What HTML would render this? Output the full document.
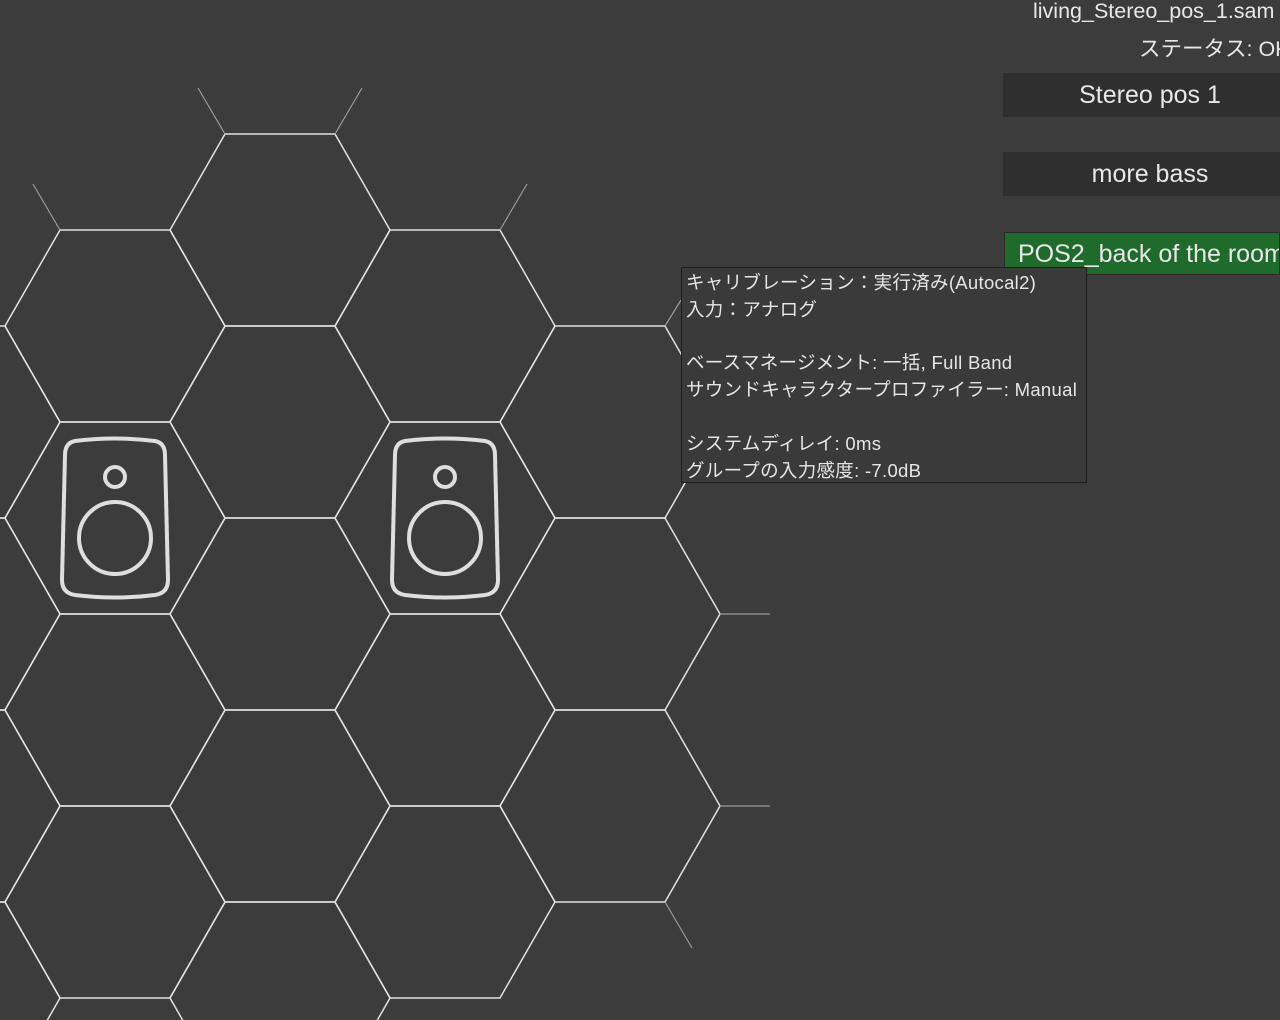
<!DOCTYPE html>
<html><head><meta charset="utf-8"><style>
html,body{margin:0;padding:0;overflow:hidden;width:1280px;height:1020px;}
body{background:#3c3c3c;position:relative;font-family:"Liberation Sans","Noto Sans CJK JP",sans-serif;color:#e8e8e8;}
svg{position:absolute;left:0;top:0;}
.t{position:absolute;white-space:nowrap;font-size:21.5px;}
.btn{position:absolute;left:1003px;width:294px;height:44px;background:#2f2f2f;font-size:25px;line-height:44px;text-align:center;white-space:nowrap;}
.green{position:absolute;left:1004px;top:232px;width:276px;height:43px;background:#1f6b2b;border:1px solid #2a2a2a;font-size:25px;line-height:43px;padding-left:13px;box-sizing:border-box;white-space:nowrap;overflow:hidden;}
.tip{position:absolute;left:681px;top:267px;width:406px;height:216px;background:#3a3a3a;border:1px solid #1e1e1e;box-sizing:border-box;font-size:18.5px;line-height:26.8px;padding:2px 0 0 4px;color:#e6e6e6;white-space:nowrap;overflow:hidden;}
.tip span{letter-spacing:0.3px;}
</style></head><body>
<svg width="1280" height="1020" viewBox="0 0 1280 1020">
<defs><polygon id="h" points="-110,0 -55,-96 55,-96 110,0 55,96 -55,96" fill="none" stroke="#e2e2e2" stroke-width="1.5"/></defs>
<use href="#h" x="-50" y="422"/><use href="#h" x="-50" y="614"/><use href="#h" x="-50" y="806"/><use href="#h" x="-50" y="998"/>
<use href="#h" x="115" y="326"/><use href="#h" x="115" y="518"/><use href="#h" x="115" y="710"/><use href="#h" x="115" y="902"/>
<use href="#h" x="280" y="230"/><use href="#h" x="280" y="422"/><use href="#h" x="280" y="614"/><use href="#h" x="280" y="806"/><use href="#h" x="280" y="998"/>
<use href="#h" x="445" y="326"/><use href="#h" x="445" y="518"/><use href="#h" x="445" y="710"/><use href="#h" x="445" y="902"/>
<use href="#h" x="610" y="422"/><use href="#h" x="610" y="614"/><use href="#h" x="610" y="806"/>
<g stroke="#9a9a9a" stroke-width="1.2">
<line x1="225" y1="134" x2="198" y2="88"/><line x1="335" y1="134" x2="362" y2="88"/>
<line x1="60" y1="230" x2="33" y2="184"/><line x1="500" y1="230" x2="527" y2="184"/>
<line x1="665" y1="326" x2="681" y2="300"/><line x1="720" y1="614" x2="770" y2="614"/>
<line x1="720" y1="806" x2="770" y2="806"/><line x1="665" y1="902" x2="692" y2="948"/>
</g>
<g fill="none" stroke="#dedede" stroke-width="4">
<g>
<path d="M75,441 Q115,436 155,441 Q165,443 165,455 L168,580 Q168,593 155,595 Q115,600 75,595 Q62,593 62,580 L65,455 Q65,443 75,441 Z"/>
<circle cx="115" cy="477" r="10"/><circle cx="115" cy="538" r="36"/>
</g>
<g transform="translate(330,0)">
<path d="M75,441 Q115,436 155,441 Q165,443 165,455 L168,580 Q168,593 155,595 Q115,600 75,595 Q62,593 62,580 L65,455 Q65,443 75,441 Z"/>
<circle cx="115" cy="477" r="10"/><circle cx="115" cy="538" r="36"/>
</g>
</g>
</svg>
<div class="t" style="left:1033px;top:-1px;">living_Stereo_pos_1.sam</div>
<div class="t" style="left:1139px;top:32px;">ステータス: OK</div>
<div class="btn" style="top:73px;">Stereo pos 1</div>
<div class="btn" style="top:152px;">more bass</div>
<div class="green">POS2_back of the room</div>
<div class="tip"><span>キャリブレーション：実行済み(Autocal2)<br>入力：アナログ<br><br>ベースマネージメント: 一括, Full Band<br>サウンドキャラクタープロファイラー: Manual<br><br>システムディレイ: 0ms<br>グループの入力感度: -7.0dB</span></div>
</body></html>
